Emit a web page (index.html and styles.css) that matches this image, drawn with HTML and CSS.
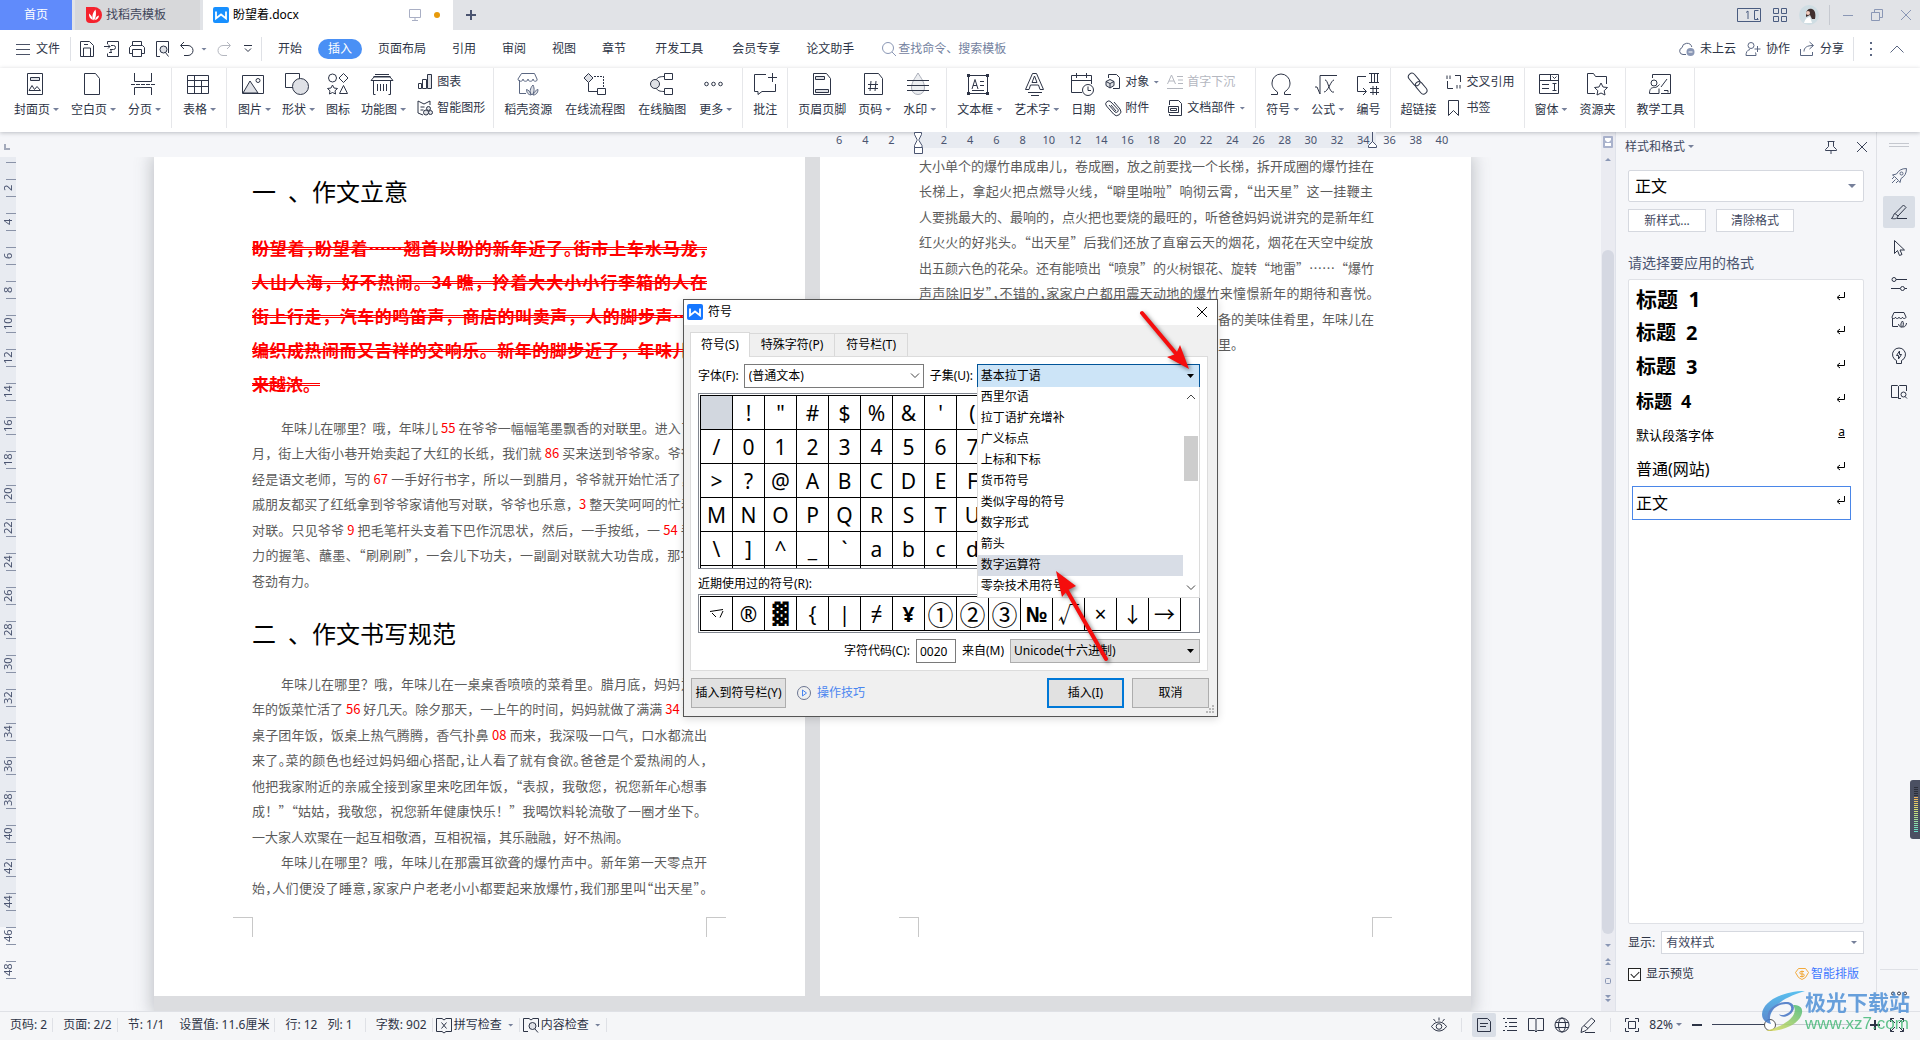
FILE: index.html
```html
<!DOCTYPE html>
<html lang="zh-CN">
<head>
<meta charset="utf-8">
<title>盼望着.docx</title>
<link rel="stylesheet" href="styles.css">
</head>
<body>
<header class="titlebar">
  <button class="doctab doctab-home">首页</button>
  <button class="doctab doctab-store">
    <svg class="i16" viewBox="0 0 16 16"><path d="M0 0h8a8 8 0 0 1 0 16H4a4 4 0 0 1-4-4z" fill="#f5222d"/><path d="M8 13.500C5.500 11 6 6.500 9.500 2.500c1 4 .5 8-1.500 11zM7 13C4 12 2.800 9.500 3 6.500 5 8 6.500 10 7 13zM9 13c.5-2.500 2-4 4-4.500-.3 2.500-1.500 4-4 4.500z" fill="#fff"/></svg>
    <span>找稻壳模板</span>
  </button>
  <button class="doctab doctab-active">
    <svg class="i16" viewBox="0 0 16 16"><rect width="16" height="16" rx="2" fill="#1890ff"/><path d="M3 4.500v7L8 7.500l5 4v-7" fill="none" stroke="#fff" stroke-width="1.800"/></svg>
    <span class="grow">盼望着.docx</span>
    <svg class="i14" viewBox="0 0 14 14" fill="none" stroke="#a9afc4"><path d="M1.500 1.500h11v8h-11zM7 9.500v3M4 12.500h6"/></svg>
    <i class="dot"></i>
  </button>
  <button class="plain newtab"><svg class="i14" viewBox="0 0 14 14"><path d="M7 2v10M2 7h10" stroke="#4a5470" stroke-width="2"/></svg></button>
  <div class="grow"></div>
  <div class="wincontrols">
    <svg width="24" height="14" viewBox="0 0 24 14" fill="none" stroke="#4a5c80"><path d="M.5.5h23v13H.5zM21.500 2.500h-4v9h4M9 4.500l2-1.500v8M20 10.500h1"/></svg>
    <svg width="14" height="14" viewBox="0 0 14 14" fill="none" stroke="#4a5c80"><path d="M.5.5h5v5h-5zM8.500.5h5v5h-5zM.5 8.500h5v5h-5zM8.500 8.500h5v5h-5z"/></svg>
    <svg width="20" height="20" viewBox="0 0 20 20"><circle cx="10" cy="10" r="10" fill="#cfdde3"/><path d="M7 9c0-4 3-6 6-5 3 1 4 5 3 10h-3l-2-4-4 2z" fill="#40302f"/><path d="M5 18c1-4 3-6 6-6l2 6z" fill="#fff"/><circle cx="9" cy="8" r="2" fill="#f0cdbf"/></svg>
    <i class="vsep"></i>
    <svg width="12" height="12" viewBox="0 0 12 12" stroke="#8a97b5"><path d="M1 6.500h10"/></svg>
    <svg width="12" height="12" viewBox="0 0 12 12" fill="none" stroke="#8a97b5"><path d="M.5 3.500h8v8h-8zM3.500 3.500v-3h8v8h-3"/></svg>
    <svg width="12" height="12" viewBox="0 0 12 12" stroke="#8a97b5"><path d="M1 1l10 10M11 1L1 11"/></svg>
  </div>
</header>

<nav class="menubar">
  <button class="plain filebtn"><svg class="i14" viewBox="0 0 14 14" stroke="#4b5266"><path d="M0 2.500h14M0 7.500h14M0 12.500h14"/></svg>文件</button>
  <i class="vsep"></i>
  <div class="quick">
    <svg class="i16 ln" viewBox="0 0 16 16"><path d="M1.500.5h9l4 4v11h-13zM4.500 15v-8h7v8M5 3.500h4"/></svg>
    <svg class="i16 ln" viewBox="0 0 16 16"><path d="M3.500 3V.5h11v15h-11v-3M0 5.500h6l-2-2m2 2-2 2M7 12V8m0-3.500h2.500a2 2 0 0 1 0 4H6M5 11.500h3"/></svg>
    <svg class="i16 ln" viewBox="0 0 16 16"><path d="M3.500 4V.5h9V4M3.500 12.500h-3v-6l2-2h11l2 2v6h-3M3.500 8.500h9v7h-9z"/></svg>
    <svg class="i16 ln" viewBox="0 0 16 16"><path d="M6 15.500H2.500V.5h12V12"/><circle cx="9.500" cy="8.500" r="3.500" fill="#dfe1e6"/><path d="M11.500 11.500l3 4"/></svg>
    <span class="undo"><svg class="i16 ln" viewBox="0 0 16 16"><path d="M5 1L1.500 4.500 5 8M2 4.500h7a5 5 0 0 1 0 10H5"/></svg><i class="caret"></i></span>
    <svg class="i16 ln faint" viewBox="0 0 16 16"><path d="M11 1l3.500 3.500L11 8M14 4.500H7a5 5 0 0 0 0 10h4"/></svg>
    <svg class="i8 ln" viewBox="0 0 8 8"><path d="M0 .5h8M1 3.500l3 3 3-3"/></svg>
  </div>
  <i class="vsep"></i>
  <div class="tabs">
    <button>开始</button><button class="on">插入</button><button>页面布局</button><button>引用</button><button>审阅</button><button>视图</button><button>章节</button><button class="roomy">开发工具</button><button class="roomy">会员专享</button><button>论文助手</button>
  </div>
  <button class="plain search"><svg class="i16" viewBox="0 0 16 16" fill="none" stroke="#8a97b5"><circle cx="7" cy="7" r="5.500"/><path d="M11 11l4 4"/></svg>查找命令、搜索模板</button>
  <div class="grow"></div>
  <button class="plain act"><svg class="i16 ln soft" viewBox="0 0 16 16"><path d="M7 13.500H4a3.500 3.500 0 0 1-1-6.800A5 5 0 0 1 12.800 6"/><circle cx="11.500" cy="11" r="4" fill="#8a97b5" stroke="none"/><path d="M9.500 11h4" stroke="#fff"/></svg>未上云</button>
  <button class="plain act"><svg class="i16 ln soft" viewBox="0 0 16 16"><circle cx="6" cy="4.500" r="3"/><path d="M5 8.500c-3 .5-4 3-4 6h10c0-1 0-2-.5-3M12.500 5v6M9.500 8h6"/></svg>协作</button>
  <button class="plain act"><svg class="i16 ln soft" viewBox="0 0 16 16"><path d="M1.500 8v6.500h12V11M5 10.500c0-4 3-6 9-6M10.500 1l4 3.500-4 3.500"/></svg>分享</button>
  <i class="vsep"></i>
  <svg class="dots" width="3" height="14" viewBox="0 0 3 14" fill="#5b6782"><path d="M0 0h2v2H0zM0 6h2v2H0zM0 12h2v2H0z"/></svg>
  <svg class="fold" width="14" height="8" viewBox="0 0 14 8" fill="none" stroke="#5b6782"><path d="M.5 7.500L7 1l6.500 6.500"/></svg>
</nav>

<div class="ribbon">
  <div class="group">
    <button class="tool"><svg class="ln" viewBox="0 0 24 24"><path d="M4.500 1.500h15v21h-15z"/><path d="M7.500 5.500h9v3h-9z" fill="#dfe1e6"/><path d="M6 18.500l3-5 2.500 4 2.500-3 3.500 4z"/></svg><span>封面页<i class="caret"></i></span></button>
    <button class="tool"><svg class="ln" viewBox="0 0 24 24"><path d="M4.500 1.500h11l4 5v16h-15z"/></svg><span>空白页<i class="caret"></i></span></button>
    <button class="tool"><svg class="ln" viewBox="0 0 24 24"><path d="M3.500 1v8.500h17V1M3.500 23v-7.500h17V23"/><path d="M0 12.500h24" stroke-dasharray="4 1"/></svg><span>分页<i class="caret"></i></span></button>
  </div>
  <div class="group lead-in">
    <button class="tool"><svg class="ln" viewBox="0 0 24 24"><path d="M1.500 3.500h21v18h-21zM1.500 8.500h21M1.500 14.500h21M8.500 3.500v18M15.500 8.500v13"/></svg><span>表格<i class="caret"></i></span></button>
  </div>
  <div class="group lead-in snug">
    <button class="tool"><svg class="ln" viewBox="0 0 24 24"><path d="M1.500 3.500h21v18h-21z"/><path d="M2 21L9 9l8 12z" fill="#dfe1e6"/><circle cx="17" cy="8.500" r="2"/></svg><span>图片<i class="caret"></i></span></button>
    <button class="tool"><svg class="ln" viewBox="0 0 24 24"><path d="M.5 1.500h14v14H.5z"/><circle cx="15.500" cy="14.500" r="8" fill="#dfe1e6"/></svg><span>形状<i class="caret"></i></span></button>
    <button class="tool"><svg class="ln" viewBox="0 0 24 24"><circle cx="6.500" cy="6" r="4"/><path d="M17.500 1.500L22 6l-4.500 4.500L13 6zM17.500 13.500l4 8h-8zM6.500 13l1.500 3 3.500.5-2.500 2.300.6 3.200-3.100-1.500-3.100 1.500.6-3.200L1.500 16.500 5 16z"/></svg><span>图标</span></button>
    <button class="tool"><svg class="ln" viewBox="0 0 24 24"><path d="M5 2.500h14M3.500 4.500h17M1 8.500h22L20 5H4zM3.500 9v13.500h2M20.500 9v13.500h-2M7.500 12v7M10.500 12v7M13.500 12v7M16.500 12v7"/></svg><span>功能图<i class="caret"></i></span></button>
    <div class="pair">
      <button class="mini"><svg class="ln" viewBox="0 0 16 16"><path d="M1.500 9.500h3v5h-3zM5.500 5.500h4v9h-4z"/><path d="M10.500.5h4v14h-4z" fill="#dfe1e6"/></svg>图表</button>
      <button class="mini"><svg class="ln" viewBox="0 0 16 16"><path d="M1 1l6 3 6-3v4M1 1v12l5 2M3.500 7h4M3.500 10h3"/><circle cx="11.500" cy="8.500" r="2" fill="#dfe1e6"/><circle cx="9" cy="12.500" r="2.500" fill="#dfe1e6"/><circle cx="13.500" cy="12.500" r="2" fill="#dfe1e6"/></svg>智能图形</button>
    </div>
  </div>
  <div class="group airy">
    <button class="tool"><svg class="ln soft" viewBox="0 0 24 24"><path d="M3.500 8v13.500H10M2 7c0 3 5 3 5 0 0 3 5 3 5 0 0 3 5 3 5 0 0 3 5 3 4 0l-2.500-5.500h-13z"/><path d="M16 23c-3-2-2-7 1-10 2 4 1 8-1 10zM15 23c-4-.5-4.500-4-4.500-5.500 2 .5 4 2.500 4.500 5.500zM17 23c1-3 3-5 5-5.500 0 2-1 5.500-5 5.500z" fill="#dfe1e6"/></svg><span>稻壳资源</span></button>
    <button class="tool"><svg class="ln" viewBox="0 0 24 24"><path d="M5.500 1.500L10 6l-4.500 4.500L1 6z" fill="#dfe1e6"/><path d="M5.500 10.500v9h9M14.500 16.500h8v6h-8z"/><path d="M11 4.500h9.500V16" stroke-dasharray="2 1"/></svg><span>在线流程图</span></button>
    <button class="tool"><svg class="ln" viewBox="0 0 24 24"><circle cx="5" cy="12" r="4.500" fill="#dfe1e6"/><path d="M14.500 1.500h8v6h-8zM14.500 16.500h8v6h-8zM6.500 7.500c1-2 3-3 8-3M6.500 16.500c1 2 3 3 8 3"/></svg><span>在线脑图</span></button>
    <button class="tool"><svg class="ln" viewBox="0 0 24 24"><circle cx="4.500" cy="12" r="1.800"/><circle cx="11.500" cy="12" r="1.800"/><circle cx="18.500" cy="12" r="1.800"/></svg><span>更多<i class="caret"></i></span></button>
  </div>
  <div class="group">
    <button class="tool"><svg class="ln" viewBox="0 0 24 24"><path d="M13 2.500H1.500v17H5v3l4-3h13.500V12M19.500 1v9M15 5.500h9"/></svg><span>批注</span></button>
  </div>
  <div class="group">
    <button class="tool"><svg class="ln" viewBox="0 0 24 24"><path d="M3.500 1.500h13l4 5v16h-17z"/><path d="M5.500 4.500h9v3h-9zM5.500 17.500h13v3h-13z" fill="#dfe1e6"/></svg><span>页眉页脚</span></button>
    <button class="tool"><svg class="ln" viewBox="0 0 24 24"><path d="M3.500 1.500h14l4 5v16h-18zM10 9l-1 10M15 9l-1 10M7 12.500h10M7 16.500h10"/></svg><span>页码<i class="caret"></i></span></button>
    <button class="tool"><svg class="ln" viewBox="0 0 24 24"><path d="M12 1C9 6 5.500 10 5.500 16a6.500 6.500 0 0 0 13 0C18.500 10 15 6 12 1z" stroke="#a9adb8" fill="#eceef1"/><path d="M1 8.500h22M1 13.500h22M1 18.500h22"/></svg><span>水印<i class="caret"></i></span></button>
  </div>
  <div class="group">
    <button class="tool"><svg class="ln" viewBox="0 0 24 24"><path d="M2.500 3.500h19v18h-19zM6 17L9 7.500 12 17M7 13.500h4M14 9.500h4M14 13.500h4M6 18.500h12"/><path d="M1 2h3v3H1zM20 2h3v3h-3zM1 20h3v3H1zM20 20h3v3h-3z" fill="#2d3446" stroke="none"/></svg><span>文本框<i class="caret"></i></span></button>
    <button class="tool"><svg class="ln" viewBox="0 0 24 24"><path d="M2.500 17.500L9.500 1.500h4l7 16H17L15.500 13h-8L6 17.500zM9 10.500h5l-2.500-6.500zM5 20.500h14M8 23.500h8"/></svg><span>艺术字<i class="caret"></i></span></button>
    <button class="tool"><svg class="ln" viewBox="0 0 24 24"><path d="M11 20.500H.5v-17h20V12M.5 8.500h20M5.500 1v5M15.500 1v5"/><circle cx="17" cy="18" r="5.500"/><path d="M17 14.500v4h3"/></svg><span>日期</span></button>
    <div class="pair">
      <button class="mini"><svg class="ln" viewBox="0 0 16 16"><path d="M3.500 4V.5h8l3 3v11H8"/><path d="M5 5.500l4 2v4l-4 2.500-4-2.500v-4zM1 7.500l4 2 4-2M5 9.500V14" fill="#dfe1e6"/></svg>对象<i class="caret"></i></button>
      <button class="mini"><svg class="ln" viewBox="0 0 16 16"><path d="M4 5l6 7a2 2 0 0 0 3-2.500L6 2A3 3 0 0 0 1.500 6l7 8A4 4 0 0 0 15 9L9 2M6 5l5 6"/></svg>附件</button>
    </div>
    <div class="pair">
      <button class="mini off"><svg class="ln faint" viewBox="0 0 16 16"><path d="M.5 10L4.500 1l4 9M2 7h5M10 2.500h6M11 6h5M11 9.500h5M0 14.500h16"/></svg>首字下沉</button>
      <button class="mini"><svg class="ln" viewBox="0 0 16 16"><path d="M2.500 5V.5h9l3 3v12h-12V14"/><path d="M1.500 6.500h10v6h-10z" fill="#fff"/><path d="M3.500 8.500h6v2h-6z"/></svg>文档部件<i class="caret"></i></button>
    </div>
  </div>
  <div class="group">
    <button class="tool"><svg class="ln" viewBox="0 0 24 24"><path d="M2 22.500h6.500V20C4 17 3 14 3 11a9 9 0 0 1 18 0c0 3-1 6-5.500 9v2.500H22"/></svg><span>符号<i class="caret"></i></span></button>
    <button class="tool"><svg class="ln" viewBox="0 0 24 24"><path d="M1 15h2l3 7V3.500h17M11 8c3-1 4 14 9 12M20 8c-3 0-6 12-10 12"/></svg><span>公式<i class="caret"></i></span></button>
    <button class="tool"><svg class="ln" viewBox="0 0 24 24"><path d="M10 4.500H1.500v15H10M7 16l3.500 3.500L7 23M13 1.500h10M13 10.500h10M15.500 1.500v9M18.500 1.500v9M21.500 1.500v9M17 14v9M20.500 14v9M14 16.500h9M14 20.500h9"/></svg><span>编号</span></button>
  </div>
  <div class="group trim">
    <button class="tool"><svg class="ln" viewBox="0 0 24 24"><g transform="rotate(50 12 12)"><rect x="-1" y="8.500" width="14" height="7" rx="3.500"/><rect x="10" y="8.500" width="14" height="7" rx="3.500"/></g></svg><span>超链接</span></button>
    <div class="pair">
      <button class="mini"><svg class="ln" viewBox="0 0 16 16"><path d="M1.500 7v7.500H7M9 1.500h5.500V8M1 5V1.500M4 5V1.500M11 14.500V11M14 14.500V11"/></svg>交叉引用</button>
      <button class="mini"><svg class="ln" viewBox="0 0 16 16"><path d="M2.500.5h10v15L7.500 10.500l-5 5z"/></svg>书签</button>
    </div>
  </div>
  <div class="group trim">
    <button class="tool"><svg class="ln" viewBox="0 0 24 24"><path d="M2.500 2.500h19v19h-19zM2.500 8.500h19M13.500 2.500v6M15.500 4.500l2 2 2-2M5 12.500h7M5 16.500h7M17.500 11v8M15.500 11.500h4M15.500 18.500h4"/></svg><span>窗体<i class="caret"></i></span></button>
    <button class="tool"><svg class="ln" viewBox="0 0 24 24"><path d="M10 21.500H2.500v-20h6l2 3h11V12"/><path d="M16 11l2 4 4.500.5-3.300 3.200.8 4.300-4-2-4 2 .8-4.300L9.500 15.500 14 15z" fill="#fff"/></svg><span>资源夹</span></button>
  </div>
  <div class="group">
    <button class="tool"><svg class="ln" viewBox="0 0 24 24"><path d="M4.500 6V2.500h18v19H13M13 15l6-8M16 18.500h4v2"/><circle cx="6" cy="11" r="3"/><path d="M1.500 21.500c0-5 2-6 5-6 2 0 3-1 5-3M1.500 21.500H11v-5"/></svg><span>教学工具</span></button>
  </div>
</div>

<main class="work">
  <section class="canvas">
    <div class="hruler">
      <svg class="corner" width="6" height="6" viewBox="0 0 6 6"><path d="M1 0v5h5" fill="none" stroke="#a3aabb" stroke-width="2"/></svg>
      <div class="hscale">
        <div class="hticks">
          <span>6</span><span>4</span><span>2</span><span class="zero"><svg width="10" height="26" viewBox="0 0 10 26" fill="#fff" stroke="#4a5470"><path d="M1.500.5h7v2L6 7.500v1l3 5v2H1.500v-2l2.500-5v-1L1.500 2.500zM1.500 15.500h8v6h-8z"/></svg></span>
          <span>2</span><span>4</span><span>6</span><span>8</span><span>10</span><span>12</span><span>14</span><span>16</span><span>18</span><span>20</span><span>22</span><span>24</span><span>26</span><span>28</span><span>30</span><span>32</span><span class="stop">34<svg width="10" height="20" viewBox="0 0 10 20" fill="#fff" stroke="#4a5470"><path d="M5.500 0v10M1.500 15.500v-2l4-4 4 4v2z"/></svg></span><span>36</span><span>38</span><span>40</span>
        </div>
      </div>
    </div>
    <div class="canvasbody">
      <div class="vruler">
        <div class="vticks">
          <span></span><span>2</span><span>4</span><span>6</span><span>8</span><span>10</span><span>12</span><span>14</span><span>16</span><span>18</span><span>20</span><span>22</span><span>24</span><span>26</span><span>28</span><span>30</span><span>32</span><span>34</span><span>36</span><span>38</span><span>40</span><span>42</span><span>44</span><span class="out">46</span><span class="out">48</span>
        </div>
      </div>
      <div class="stage">
        <div class="sheets">
          <article class="sheet">
            <h1>一&ensp;、作文立意</h1>
            <p class="lead"><span class="tight">盼望着，盼望着……翘首以盼的新年近了。街市上车水马龙，</span><span>人山人海，好不热闹。34 瞧，拎着大大小小行李箱的人在</span><span>街上行走，汽车的鸣笛声，商店的叫卖声，人的脚步声……</span><span>编织成热闹而又吉祥的交响乐。新年的脚步近了，年味儿越</span><span class="end">来越浓。</span></p>
            <p class="body"><span class="first">年味儿在哪里？哦，年味儿 <b>55</b> 在爷爷一幅幅笔墨飘香的对联里。进入了腊</span><span>月，街上大街小巷开始卖起了大红的长纸，我们就 <b>86</b> 买来送到爷爷家。爷爷曾</span><span>经是语文老师，写的 <b>67</b> 一手好行书字，所以一到腊月，爷爷就开始忙活了，亲</span><span>戚朋友都买了红纸拿到爷爷家请他写对联，爷爷也乐意，<b>3</b> 整天笑呵呵的忙着写</span><span>对联。只见爷爷 <b>9</b> 把毛笔杆头支着下巴作沉思状，然后，一手按纸，一 <b>54</b> 手有</span><span>力的握笔、蘸墨、“刷刷刷”，一会儿下功夫，一副副对联就大功告成，那字体</span><span class="end">苍劲有力。</span></p>
            <h1>二&ensp;、作文书写规范</h1>
            <p class="body"><span class="first">年味儿在哪里？哦，年味儿在一桌桌香喷喷的菜肴里。腊月底，妈妈为了</span><span>年的饭菜忙活了 <b>56</b> 好几天。除夕那天，一上午的时间，妈妈就做了满满 <b>34</b> 大一</span><span>桌子团年饭，饭桌上热气腾腾，香气扑鼻 <b>08</b> 而来，我深吸一口气，口水都流出</span><span class="tight">来了。菜的颜色也经过妈妈细心搭配，让人看了就有食欲。爸爸是个爱热闹的人，</span><span>他把我家附近的亲戚全接到家里来吃团年饭，“表叔，我敬您，祝您新年心想事</span><span>成！”“姑姑，我敬您，祝您新年健康快乐！”我喝饮料轮流敬了一圈才坐下。</span><span class="end">一大家人欢聚在一起互相敬酒，互相祝福，其乐融融，好不热闹。</span><span class="first">年味儿在哪里？哦，年味儿在那震耳欲聋的爆竹声中。新年第一天零点开</span><span class="tight">始，人们便没了睡意，家家户户老老小小都要起来放爆竹，我们那里叫“出天星”。</span></p>
            <i class="crop crop-l"></i><i class="crop crop-r"></i>
          </article>
          <article class="sheet">
            <p class="body cont"><span>大小单个的爆竹串成串儿，卷成圈，放之前要找一个长梯，拆开成圈的爆竹挂在</span><span>长梯上，拿起火把点燃导火线，“噼里啪啦”响彻云霄，“出天星”这一挂鞭主</span><span>人要挑最大的、最响的，点火把也要烧的最旺的，听爸爸妈妈说讲究的是新年红</span><span>红火火的好兆头。“出天星”后我们还放了直窜云天的烟花，烟花在天空中绽放</span><span>出五颜六色的花朵。还有能喷出“喷泉”的火树银花、旋转“地雷”……“爆竹</span><span class="tight">声声除旧岁”，不错的，家家户户都用震天动地的爆竹来憧憬新年的期待和喜悦。</span><span>年味儿在年夜饭的餐桌上，在爷爷奶奶和妈妈精心准备的美味佳肴里，年味儿在</span><span class="end">家人团聚的欢声笑语里，年味儿在每个人心中的记忆里。</span></p>
            <i class="crop crop-l"></i><i class="crop crop-r"></i>
          </article>
        </div>
      </div>
    </div>
  </section>

  <div class="scroll">
    <svg class="split" width="10" height="12" viewBox="0 0 10 12"><rect width="10" height="12" rx="1" fill="#a9b2cc"/><path d="M2 2h6v2L6 6H4L2 4zM2 7h6v3H2z" fill="#fff"/></svg>
    <i class="up"></i>
    <div class="thumb"></div>
    <div class="steps">
      <i class="down"></i>
      <svg width="6" height="8" viewBox="0 0 6 8" fill="#8a97b5"><path d="M0 3l3-3 3 3zM0 7l3-3 3 3z"/></svg>
      <svg width="6" height="6" viewBox="0 0 6 6" fill="none" stroke="#8a97b5"><rect x=".5" y=".5" width="5" height="5" rx="1"/></svg>
      <svg width="6" height="8" viewBox="0 0 6 8" fill="#8a97b5"><path d="M0 0h6L3 3zM0 4h6L3 7z"/></svg>
    </div>
  </div>

  <aside class="styles">
    <div class="phead"><span>样式和格式<i class="caret"></i></span><div class="grow"></div>
      <svg width="14" height="14" viewBox="0 0 14 14" fill="none" stroke="#3a4258"><path d="M3.500 1.500h7M4.500 1.500v5l-3 3v1h11v-1l-3-3v-5M7 10.500V14"/></svg>
      <svg width="12" height="12" viewBox="0 0 12 12" stroke="#3a4258"><path d="M1 1l10 10M11 1L1 11"/></svg>
    </div>
    <div class="pbody">
      <div class="selwrap"><select class="bigsel" aria-label="样式"><option>正文</option></select><i class="caret caret-lg"></i></div>
      <div class="pbtns"><button>新样式...</button><button>清除格式</button></div>
      <div class="plabel">请选择要应用的格式</div>
      <ul class="stylelist">
        <li class="s1">标题&ensp;1<svg class="ret" viewBox="0 0 9 8"><path d="M8.500 0v5.500H2M4 3L1 5.500 4 8" /></svg></li>
        <li class="s2">标题&ensp;2<svg class="ret" viewBox="0 0 9 8"><path d="M8.500 0v5.500H2M4 3L1 5.500 4 8" /></svg></li>
        <li class="s2">标题&ensp;3<svg class="ret" viewBox="0 0 9 8"><path d="M8.500 0v5.500H2M4 3L1 5.500 4 8" /></svg></li>
        <li class="s4">标题&ensp;4<svg class="ret" viewBox="0 0 9 8"><path d="M8.500 0v5.500H2M4 3L1 5.500 4 8" /></svg></li>
        <li class="s5">默认段落字体<u class="chr">a</u></li>
        <li>普通(网站)<svg class="ret" viewBox="0 0 9 8"><path d="M8.500 0v5.500H2M4 3L1 5.500 4 8" /></svg></li>
        <li class="cur">正文<svg class="ret" viewBox="0 0 9 8"><path d="M8.500 0v5.500H2M4 3L1 5.500 4 8" /></svg></li>
      </ul>
      <div class="showrow"><label for="show">显示:</label><div class="selwrap grow"><select id="show"><option>有效样式</option></select><i class="caret"></i></div></div>
      <div class="prow"><label><input type="checkbox" class="chk" checked>显示预览</label>
        <a href="#"><svg width="14" height="14" viewBox="0 0 14 14" fill="none" stroke="#f2a93b"><path d="M3.500 1.500h7l3 4-3 5-3.500 2-3.500-2-3-5zM9 4.500H6a1 1 0 0 0 0 2.500h2a1 1 0 0 1 0 2.500H5M7 3.500v7"/></svg>智能排版</a></div>
    </div>
  </aside>

  <aside class="strip">
    <svg class="grip" width="20" height="4" viewBox="0 0 20 4" stroke="#c5c8cf"><path d="M0 .5h20M0 3.500h20"/></svg>
    <button><svg class="i16 ln soft" viewBox="0 0 16 16"><path d="M15.500.5c-5 0-8 2-10 5.500l-4 1 2 1.500 4 4 1.500 2 1-4c3.500-2 5.500-5 5.500-10zM1 11l2-2M1 15l3.500-3.500M5 15l2-2"/><circle cx="10.500" cy="5.500" r="1.500"/></svg></button>
    <button class="on"><svg class="i16 ln" viewBox="0 0 16 16"><path d="M4 9.500L12.500 1l2.500 2.500L7 12M4 9.500c-2 .5-1 3-3.500 5 3 .5 6 .5 6.500-2.500zM6 14.500h10"/></svg></button>
    <button><svg class="i16 ln" viewBox="0 0 16 16"><path d="M3.500.5v13l3-3 2 5 2.500-1-2-4.500h4.500z"/></svg></button>
    <button><svg class="i16 ln" viewBox="0 0 16 16"><circle cx="3" cy="3.500" r="2"/><path d="M5 3.500h11M0 12.500h9M14 12.500h2"/><circle cx="11.500" cy="12.500" r="2"/></svg></button>
    <button><svg class="i16 ln" viewBox="0 0 16 16"><path d="M1.500 6v8.500H7M1 5c0 2 3.500 2 3.500 0 0 2 3.500 2 3.500 0 0 2 3.500 2 3.500 0 0 2 3.500 2 3.500 0l-2-4.500H3z"/><path d="M11 15.500c-2-2-1-5 .5-6.500 1.500 2 1 5-.5 6.500zM10.500 15c-2 0-3-2-3-3M12 15c2 0 3.500-2 3.500-4" fill="#dfe1e6"/></svg></button>
    <button><svg class="i16 ln" viewBox="0 0 16 16"><path d="M5.500 12.500a6.500 6.500 0 1 1 5 0v3h-5zM8.500 3L5.500 7.500h2V11l3-4.500h-2z"/></svg></button>
    <button><svg class="i16 ln" viewBox="0 0 16 16"><path d="M7.500 14.500l-1-1h-6v-12h6l1 1 1-1h7V7M7.500 2.500v12H10"/><circle cx="12.500" cy="10.500" r="2.500"/><path d="M14 12.500l2 2"/></svg></button>
    <div class="grow"></div>
    <i class="hr"></i>
    <svg class="more" width="16" height="5" viewBox="0 0 16 5" fill="none" stroke="#2d3446"><circle cx="2" cy="2.500" r="1.500"/><circle cx="8" cy="2.500" r="1.500"/><circle cx="14" cy="2.500" r="1.500"/></svg>
  </aside>
</main>

<footer class="status">
  <span>页码: 2</span><i class="vsep"></i><span>页面: 2/2</span><i class="vsep"></i><span>节: 1/1</span><span class="far">设置值: 11.6厘米</span><i class="vsep"></i><span>行: 12</span><span>列: 1</span><i class="vsep wide"></i><span>字数: 902</span><i class="vsep"></i>
  <button class="plain chk-btn"><svg class="i16 ln" viewBox="0 0 16 16"><path d="M6 1.500H.5v13H6l2 1.500 2-1.500h5.500v-13H10L8 3 6 1.500M5.500 5.500l5 6M10.500 5.500l-5 6"/></svg>拼写检查<i class="caret"></i></button><i class="vsep"></i>
  <button class="plain chk-btn"><svg class="i16 ln" viewBox="0 0 16 16"><path d="M5 14.500H.5v-13H6L8 3l2-1.500h5.500V10"/><circle cx="9.500" cy="9" r="3.500" fill="#dfe1e6"/><path d="M12 12l3 3.500"/></svg>内容检查<i class="caret"></i></button><i class="vsep"></i>
  <div class="grow"></div>
  <div class="views">
    <svg class="i16 ln" viewBox="0 0 16 16"><path d="M.5 9.500c4-6 11-6 15 0-4 6-11 6-15 0zM8 .5v3M2.500 2l2 2.500M13.500 2l-2 2.500"/><circle cx="8" cy="9.500" r="2.800"/></svg>
    <i class="vsep"></i>
    <span class="on"><svg class="i16 ln" viewBox="0 0 16 16"><path d="M1.500 1.500h10l3 3v10h-13zM4 6.500h8M4 9.500h6"/></svg></span>
    <svg class="i16 ln" viewBox="0 0 16 16"><path d="M1 1.500h2M5 1.500h10M3 5.500h2M7 5.500h8M3 9.500h2M7 9.500h8M1 13.500h2M5 13.500h10"/></svg>
    <svg class="i16 ln" viewBox="0 0 16 16"><path d="M.5 1.500H7l1 1 1-1h6.500v12H9.500L8 15l-1.500-1.500h-6zM8 2.500V15"/></svg>
    <svg class="i16 ln" viewBox="0 0 16 16"><circle cx="8" cy="8" r="7"/><ellipse cx="8" cy="8" rx="3.500" ry="7"/><path d="M1.500 5.500h13M1.500 10.500h13"/></svg>
    <svg class="i16 ln" viewBox="0 0 16 16"><path d="M2 10.500L11.500 1 15 4 6 13.500l-5 2zM4 8.500l4 3M5 15.500h10"/></svg>
    <i class="vsep"></i>
    <svg class="i14 ln" viewBox="0 0 14 14"><path d="M.5 4V.5H4M10 .5h3.500V4M13.500 10v3.500H10M4 13.500H.5V10M3.500 3.500h7v7h-7z"/></svg>
    <span class="pct">82%<i class="caret"></i></span>
    <svg width="10" height="2"><path d="M0 1h10" stroke="#2d3446" stroke-width="2"/></svg>
    <input class="zoom" type="range" min="0" max="100" value="38" aria-label="缩放">
    <svg class="i10" viewBox="0 0 10 10"><path d="M5 0v10M0 5h10" stroke="#2d3446" stroke-width="2"/></svg>
    <svg class="i14 ln" viewBox="0 0 14 14"><path d="M.5 4V.5H4M.5.5L5 5M10 .5h3.500V4M13.500.5L9 5M13.500 10v3.500H10M13.500 13.500L9 9M4 13.500H.5V10M.5 13.500L5 9"/></svg>
  </div>
</footer>

<div class="meter" aria-hidden="true"><i></i></div>

<section class="dialog" role="dialog" aria-label="符号">
  <div class="dtitle"><svg class="i16" viewBox="0 0 16 16"><rect width="16" height="16" rx="2" fill="#1677ff"/><path d="M3 4.500v7L8 7.500l5 4v-7" fill="none" stroke="#fff" stroke-width="1.800"/></svg><span class="grow">符号</span><svg width="12" height="12" viewBox="0 0 12 12" stroke="#000"><path d="M1 1l10 10M11 1L1 11"/></svg></div>
  <div class="dtabs"><button class="on">符号(S)</button><button>特殊字符(P)</button><button>符号栏(T)</button></div>
  <div class="dpage">
    <div class="drow">
      <label for="font">字体(F):</label>
      <div class="selwrap fontsel"><select id="font"><option>(普通文本)</option></select><svg class="chev" viewBox="0 0 10 6"><path d="M1 .5l4 4 4-4"/></svg></div>
      <label for="subset">子集(U):</label>
      <div class="combo">
        <div class="selwrap"><select id="subset"><option>基本拉丁语</option></select><i class="tri"></i></div>
        <div class="droplist">
          <ul><li>西里尔语</li><li>拉丁语扩充增补</li><li>广义标点</li><li>上标和下标</li><li>货币符号</li><li>类似字母的符号</li><li>数字形式</li><li>箭头</li><li class="on">数字运算符</li><li>零杂技术用符号</li></ul>
          <div class="dscroll"><svg class="chev" viewBox="0 0 10 6"><path d="M1 5l4-4 4 4"/></svg><i></i><svg class="chev" viewBox="0 0 10 6"><path d="M1 .5l4 4 4-4"/></svg></div>
        </div>
      </div>
    </div>
    <div class="glyphbox tall"><table class="glyphs"><tbody>
      <tr><td class="sel"></td><td>!</td><td>"</td><td>#</td><td>$</td><td>%</td><td>&amp;</td><td>'</td><td>(</td><td></td><td></td><td></td><td></td><td></td><td></td></tr>
      <tr><td>/</td><td>0</td><td>1</td><td>2</td><td>3</td><td>4</td><td>5</td><td>6</td><td>7</td><td></td><td></td><td></td><td></td><td></td><td></td></tr>
      <tr><td>&gt;</td><td>?</td><td>@</td><td>A</td><td>B</td><td>C</td><td>D</td><td>E</td><td>F</td><td></td><td></td><td></td><td></td><td></td><td></td></tr>
      <tr><td>M</td><td>N</td><td>O</td><td>P</td><td>Q</td><td>R</td><td>S</td><td>T</td><td>U</td><td></td><td></td><td></td><td></td><td></td><td></td></tr>
      <tr><td>\</td><td>]</td><td>^</td><td>_</td><td>`</td><td>a</td><td>b</td><td>c</td><td>d</td><td></td><td></td><td></td><td></td><td></td><td></td></tr>
      <tr><td></td><td></td><td></td><td></td><td></td><td></td><td></td><td></td><td></td><td></td><td></td><td></td><td></td><td></td><td></td></tr>
    </tbody></table></div>
    <div class="recent">近期使用过的符号(R):</div>
    <div class="glyphbox"><table class="glyphs"><tbody>
      <tr><td><svg width="16" height="10" viewBox="0 0 16 10" fill="none" stroke="#000"><path d="M1 2.500L14 .5M3 4l4 4M14 2l-3 6.500"/></svg></td><td>®</td><td class="shade">▓</td><td>{</td><td>|</td><td>≠</td><td class="heavy">¥</td><td class="circ">①</td><td class="circ">②</td><td class="circ">③</td><td class="heavy">№</td><td>√</td><td>×</td><td>↓</td><td>→</td></tr>
    </tbody></table></div>
    <div class="drow coderow">
      <label for="code">字符代码(C):</label><input id="code" value="0020">
      <label for="from">来自(M)</label><div class="selwrap fromsel"><select id="from"><option>Unicode(十六进制)</option></select><i class="tri"></i></div>
    </div>
  </div>
  <div class="dfoot">
    <button class="wide">插入到符号栏(Y)</button>
    <a href="#"><svg class="i14" viewBox="0 0 14 14" fill="none" stroke="#6b7590"><circle cx="7" cy="7" r="6.500"/><path d="M5.500 4l4 3-4 3z" stroke="#4a86f0"/></svg>操作技巧</a>
    <div class="grow"></div>
    <button class="primary">插入(I)</button><button>取消</button>
  </div>
  <svg class="sizer" width="9" height="9" viewBox="0 0 9 9" fill="#b8b8b8"><path d="M6 0h2v2H6zM3 3h2v2H3zM6 3h2v2H6zM0 6h2v2H0zM3 6h2v2H3zM6 6h2v2H6z"/></svg>
  <svg class="arrows" width="140" height="350" viewBox="0 0 140 350"><g fill="#f50d0d" stroke="#f50d0d" stroke-linecap="round"><path d="M85 1L121 44M49 347L9 277" fill="none" stroke-width="4"/><path d="M132 57L110 45l9-3 4-9zM-1 259l20 15-8 4-6 7z" stroke="none"/></g></svg>
</section>

<div class="mark">
  <svg width="44" height="44" viewBox="0 0 44 44"><defs><linearGradient id="sw" x1="0" y1="0" x2="0" y2="1"><stop offset="0" stop-color="#3fb7ee"/><stop offset="1" stop-color="#4373c4"/></linearGradient><linearGradient id="sg" x1="1" y1="0" x2="0" y2="1"><stop offset="0" stop-color="#46b978"/><stop offset="1" stop-color="#e8e05a"/></linearGradient></defs><path d="M44 1C22 1 2 11 1 24c0 6 4 9 9 10C6 26 12 10 44 1z" fill="url(#sw)"/><path d="M9 31c-3-8 6-17 16-17 6 0 7 6 2 9-3 2-7 3-9 1 1 3 6 4 10 1 8-5 6-14-4-13-12 1-22 12-15 19z" fill="#4373c4"/><path d="M5 41c16 1 34-7 36-18 1-6-3-8-9-8 7 10-8 21-27 26z" fill="url(#sg)"/></svg>
  <div><strong>极光下载站</strong><em>www.xz7.com</em></div>
</div>
</body>
</html>
```
FILE: styles.css
```css
* { box-sizing: border-box; }
html, body { height: 100%; }
body {
  margin: 0;
  display: flex;
  flex-direction: column;
  overflow: hidden;
  position: relative;
  font: 12px/16px "Noto Sans", "Noto Sans CJK SC", sans-serif;
  color: #2d3446;
  background: #f5f6f9;
}
button, select, input { font: inherit; color: inherit; margin: 0; padding: 0; }
button { border: 0; background: none; white-space: nowrap; }
select { appearance: none; outline: 0; width: 100%; height: 100%; border-radius: 0; }
svg { display: block; flex: none; overflow: visible; }
a { color: #4a86f0; text-decoration: none; }
h1, p, ul { margin: 0; padding: 0; }
ul { list-style: none; }
.grow { flex: 1; }
.plain { display: flex; align-items: center; }
.i16 { width: 16px; height: 16px; }
.i14 { width: 14px; height: 14px; }
.i10 { width: 10px; height: 10px; }
.i8 { width: 8px; height: 8px; }
.ln { fill: none; stroke: #2d3446; }
.soft { stroke: #5b6782; }
.faint { stroke: #b4b7bf; }
.vsep { width: 1px; background: #dfe1e6; flex: none; }
.caret {
  display: inline-block; width: 6px; height: 3px; background: #76809a;
  clip-path: polygon(0 0, 100% 0, 50% 100%); margin-left: 3px; vertical-align: 3px; flex: none;
}

/* title bar */
.titlebar { display: flex; height: 30px; background: #e1e3e7; flex: none; }
.doctab { display: flex; align-items: center; height: 30px; gap: 4px; }
.doctab-home { width: 72px; justify-content: center; background: #608bfb; color: #fff; }
.doctab-store { width: 125px; margin-left: 3px; padding-left: 11px; background: #d7d8da; color: #3f465a; }
.doctab-active { width: 250px; margin-left: 3px; padding: 0 13px 0 10px; background: #fff; color: #000; text-align: left; }
.doctab-active .dot { width: 6px; height: 6px; margin-left: 8px; border-radius: 3px; background: #e79a0b; }
.newtab { padding: 0 11px; }
.wincontrols { display: flex; align-items: center; padding-right: 8px; gap: 12px; }
.wincontrols .vsep { height: 20px; margin-left: -2px; background: #c6c9d0; }
.wincontrols svg:nth-of-type(n+5) { margin-left: 5px; }

/* menu bar */
.menubar { display: flex; align-items: center; height: 38px; background: #fff; flex: none; padding-right: 13px; }
.filebtn { padding: 0 10px 0 16px; gap: 6px; }
.menubar .vsep { height: 24px; }
.quick { display: flex; align-items: center; gap: 9px; padding: 0 9px 0 8px; }
.undo { display: flex; align-items: center; gap: 3px; }
.quick .i8 { margin: 0 0 0 3px; }
.tabs { display: flex; padding-left: 3px; }
.tabs button { height: 24px; padding: 0 13px; border-radius: 12px; }
.tabs .on { margin: 2px 3px; height: 20px; padding: 0 10px; background: #4a90f5; color: #fff; }
.tabs .roomy { margin-left: 3px; }
.search { color: #7482a0; margin-left: 14px; gap: 1px; }
.act { gap: 5px; margin-left: 9px; }
.menubar .act ~ .vsep { margin-left: 9px; }
.dots { margin: 0 13px 0 16px; }
.fold { margin: 0 3px 0 4px; }

/* ribbon */
.ribbon {
  display: flex; height: 64px; background: #fff; flex: none; position: relative;
  padding-left: 4px; box-shadow: 0 1px 4px rgba(60, 66, 80, .3);
}
.group { display: flex; gap: 12px; padding: 4px 10px 0; border-right: 1px solid #e6e7ea; height: 60px; }
.lead-in { padding-left: 11px; }
.snug { gap: 11px; padding-right: 8px; }
.trim { padding-left: 9px; }
.airy { gap: 13px; }
.tool { display: flex; flex-direction: column; height: 46px; justify-content: space-between; }
.tool svg { width: 24px; height: 24px; align-self: center; }
.tool:has(.caret) svg { margin-right: 3px; }
.pair { display: flex; flex-direction: column; gap: 10px; margin-left: -2px; padding-top: 2px; }
.snug .pair { margin-left: 0; }
.pair + .pair { margin-left: -4px; }
.mini { display: flex; align-items: center; gap: 4px; height: 16px; }
.mini svg { width: 16px; height: 16px; }
.mini .caret { margin: 0; }
.off { color: #b4b7bf; }

/* work area */
.work { flex: 1; display: flex; min-height: 0; }
.canvas { flex: 1; display: flex; flex-direction: column; min-width: 0; }
.hruler { height: 25px; flex: none; display: flex; justify-content: center; padding-left: 24px; position: relative; }
.corner { position: absolute; left: 4px; top: 12px; }
.hscale { width: 1317px; padding-left: 672px; }
.hticks { display: grid; grid-template-columns: repeat(24, 1fr); width: 629px; height: 25px; }
.hticks span { text-align: center; height: 16px; line-height: 16px; color: #4a5470; font-size: 11px; background: #e8ebf1; position: relative; }
.hticks span:nth-child(-n+3), .hticks span:nth-child(n+22) { background: none; }
.hticks .zero { background: linear-gradient(90deg, transparent 50%, #e8ebf1 50%); }
.zero svg { position: absolute; left: 8px; top: 0; z-index: 1; }
.stop svg { position: absolute; left: 17px; top: 0; z-index: 1; }
.canvasbody { flex: 1; display: flex; min-height: 0; }
.vruler { width: 16px; flex: none; overflow: hidden; }
.vticks span {
  display: block; width: 16px; height: 34px; writing-mode: vertical-rl; transform: rotate(180deg);
  font-size: 11px; line-height: 16px; text-align: center; padding-top: 16px; color: #4a5470;
  background: linear-gradient(#8a93a8, #8a93a8) 0 100% / 10px 1px no-repeat, linear-gradient(#8a93a8, #8a93a8) 0 16px / 10px 1px no-repeat, #e8ebf1;
}
.vticks span:first-child { height: 22px; background: linear-gradient(#8a93a8, #8a93a8) 0 16px / 10px 1px no-repeat, #e8ebf1; }
.vticks .out { background-color: #f5f6f9; }
.stage { flex: 1; display: flex; justify-content: center; align-items: flex-start; padding-left: 8px; overflow: hidden; }
.sheets { display: flex; gap: 15px; padding-bottom: 16px; background: #dcdde0; box-shadow: 0 0 16px 2px rgba(90, 94, 104, .35); font-family: "Noto Sans CJK SC", sans-serif; }
.sheet { width: 651px; height: 839px; background: #fff; padding: 0 98px; position: relative; }
.sheet h1 { font-size: 24px; font-weight: 400; line-height: 36px; color: #000; padding-top: 16px; }
.sheet p span { display: block; white-space: nowrap; text-align: justify; text-align-last: justify; }
.sheet p .end { text-align-last: left; }
.sheet .tight { font-feature-settings: "halt"; }
.lead { padding-top: 22px; font-size: 17px; font-weight: 700; line-height: 34px; color: #f00; }
.lead span { text-decoration: line-through double #f00; }
.body { font-size: 13px; line-height: 25px; color: #5c5c5c; padding-top: 14px; }
.body span:nth-child(even) { line-height: 26px; }
.body .first { padding-left: 29px; }
.body b { font-weight: 400; color: #f00; }
.lead + .body + h1 { padding-top: 22px; }
h1 + .body { padding-top: 20px; }
.cont { padding: 0 0 0 1px; margin-top: -4px; }
.crop { position: absolute; width: 20px; height: 20px; bottom: 59px; border-top: 1px solid #c8c8c8; }
.crop-l { left: 79px; border-right: 1px solid #c8c8c8; }
.crop-r { right: 79px; border-left: 1px solid #c8c8c8; }

/* scroll bar */
.scroll { width: 15px; flex: none; display: flex; flex-direction: column; align-items: center; background: #eaebf1; border-right: 1px solid #dfe2ea; }
.split { margin: 4px 0; }
.up, .down { width: 6px; height: 3px; background: #8a97b5; }
.up { clip-path: polygon(50% 0, 100% 100%, 0 100%); margin-top: 6px; }
.down { clip-path: polygon(0 0, 100% 0, 50% 100%); }
.thumb { flex: 1; width: 12px; margin-top: 89px; border-radius: 6px; background: #d5d8e2; }
.steps { height: 77px; display: flex; flex-direction: column; align-items: center; justify-content: space-between; padding: 10px 0 8px; }

/* styles panel */
.styles { width: 260px; flex: none; display: flex; flex-direction: column; }
.phead { display: flex; align-items: center; gap: 12px; padding: 7px 8px 0 9px; color: #3f4860; }
.phead svg + svg { margin-left: 6px; }
.pbody { flex: 1; display: flex; flex-direction: column; padding: 15px 12px 29px; }
.selwrap { position: relative; display: flex; }
.selwrap .caret { position: absolute; right: 7px; top: 10px; }
.selwrap .caret-lg { width: 8px; height: 4px; right: 8px; top: 14px; }
.bigsel { height: 32px; border: 1px solid #d5d8df; border-radius: 2px; background: #fff; padding: 0 6px; font-size: 16px; color: #000; }
.pbtns { display: flex; gap: 10px; padding-top: 7px; }
.pbtns button { width: 78px; height: 23px; border: 1px solid #d5d8df; background: #fff; color: #3f4860; }
.plabel { font-size: 14px; line-height: 20px; padding: 21px 0 6px; color: #4a5470; }
.stylelist { flex: 1; padding: 2px 12px 0 3px; border: 1px solid #dfe1e6; border-radius: 2px; background: #fff; color: #000; font-size: 16px; line-height: 32px; }
.stylelist li { display: flex; justify-content: space-between; height: 34px; padding: 0 5px 0 3px; border: 1px solid transparent; }
.stylelist .cur { border-color: #4a86e8; }
.stylelist .s1 { font-size: 21px; font-weight: 700; }
.stylelist .s2 { font-size: 20px; font-weight: 700; }
.stylelist .s4 { font-size: 18px; font-weight: 700; }
.stylelist .s5 { font-size: 13px; }
.ret { width: 9px; height: 8px; margin-top: 9px; fill: none; stroke: #000; }
.chr { font-size: 12px; line-height: 26px; }
.showrow { display: flex; align-items: center; gap: 6px; padding-top: 7px; }
.showrow select { height: 23px; border: 1px solid #d5d8df; background: #fff; padding: 0 4px; color: #3f4860; }
.prow { display: flex; justify-content: space-between; align-items: center; padding: 12px 5px 0 0; }
.prow label, .prow a { display: flex; align-items: center; gap: 5px; }
.prow a { gap: 2px; color: #3f78ff; }
.chk { appearance: none; width: 13px; height: 13px; border: 1px solid #222; background: #fff; position: relative; }
.chk:checked::after { content: ""; position: absolute; left: 2px; top: 2px; width: 7px; height: 4px; border: solid #222; border-width: 0 0 1px 1px; transform: rotate(-45deg); }

/* side strip */
.strip { width: 44px; flex: none; display: flex; flex-direction: column; align-items: center; border-left: 1px solid #dfe1e6; gap: 4px; padding-bottom: 15px; }
.grip { margin: 11px 0 9px; }
.strip button { width: 32px; height: 32px; display: flex; align-items: center; justify-content: center; border-radius: 2px; }
.strip .on { background: #d9dee6; }
.strip .hr { width: 38px; height: 1px; background: #dfe1e6; }
.strip .more { margin-top: 17px; }

/* status bar */
.status { height: 29px; flex: none; display: flex; align-items: center; gap: 10px; padding: 0 16px 2px 10px; border-top: 1px solid #dfe1e6; background: #f5f6f8; }
.status .vsep { height: 14px; margin-left: -5px; }
.status .wide { margin-left: 2px; }
.status .far { margin-left: 5px; }
.chk-btn { gap: 2px; margin-left: -7px; }
.chk-btn .caret { margin-left: 4px; }
.views { display: flex; align-items: center; gap: 10px; }
.views .vsep { margin: 0 4px; }
.views .on { background: #d9dee6; padding: 4px; margin: 0 -4px; border-radius: 2px; }
.zoom { appearance: none; width: 148px; height: 14px; background: linear-gradient(90deg, #3a4258 38%, #c6c9d0 38%) 0 6px / 100% 1px no-repeat; }
.zoom::-webkit-slider-thumb { appearance: none; width: 12px; height: 12px; border-radius: 6px; border: 1px solid #555; background: #fff; }

.meter { position: absolute; right: 0; top: 780px; width: 10px; height: 59px; padding: 7px 2px 7px 4px; border-radius: 3px 0 0 3px; background: #4b5062; }
.meter i { display: block; height: 45px; background: repeating-linear-gradient(transparent 0 1px, #4b5062 1px 2px), linear-gradient(#2c2f3a 22%, #f0b25a 22%, #d8e070 50%, #62dcc8); }

/* symbol dialog */
.dialog { position: absolute; left: calc(50% - 277px); top: 299px; width: 535px; border: 1px solid #555; background: #f0f0f0; color: #000; box-shadow: 0 2px 8px rgba(0, 0, 0, .15); }
.dtitle { display: flex; align-items: center; gap: 5px; height: 25px; padding: 0 9px 2px 3px; background: #fff; }
.dtabs { display: flex; align-items: flex-end; padding: 6px 7px 0 6px; height: 31px; }
.dtabs button { height: 23px; padding: 0 11px; border: 1px solid #d9d9d9; border-left: 0; border-bottom: 0; }
.dtabs .on { height: 25px; padding: 0 10px; border-left: 1px solid #d9d9d9; background: #fff; position: relative; margin-bottom: -1px; z-index: 1; }
.dpage { margin: 0 9px 0 6px; padding: 7px; border: 1px solid #dcdcdc; background: #fff; }
.drow { display: flex; align-items: center; }
.drow .selwrap { height: 24px; }
.fontsel { width: 180px; margin: 0 6px 0 5px; }
.fontsel select { border: 1px solid #7a7a7a; background: #fff; padding: 0 4px; }
.chev { width: 10px; height: 6px; fill: none; stroke: #444; }
.fontsel .chev { position: absolute; right: 4px; top: 9px; }
.combo { flex: 1; position: relative; margin-left: 4px; }
.combo select { border: 1px solid #005499; background: #cce4f7; padding: 0 3px; color: #000; }
.tri { position: absolute; right: 6px; top: 10px; width: 7px; height: 4px; background: #000; clip-path: polygon(0 0, 100% 0, 50% 100%); }
.droplist { position: absolute; left: 0; right: 0; top: 23px; display: flex; border: 1px solid #dcdcdc; border-top: 0; background: #fff; z-index: 2; }
.droplist ul { flex: 1; }
.droplist li { height: 21px; line-height: 20px; padding-left: 3px; }
.droplist .on { background: #d8dde6; }
.dscroll { width: 16px; display: flex; flex-direction: column; align-items: center; padding: 7px 0 6px; }
.dscroll i { width: 14px; height: 45px; margin: 36px 0 auto; background: #cdcdcd; }
.glyphbox { border: 1px solid #828790; padding: 1px; margin-top: 5px; overflow: hidden; }
.tall { height: 176px; }
.glyphs { border-spacing: 1px; background: #000; table-layout: fixed; width: 481px; }
.glyphs td { width: 31px; height: 33px; padding: 0; background: #fff; text-align: center; font: 21px/30px "Noto Sans", "Noto Sans CJK SC", sans-serif; }
.glyphs td svg { margin: 0 auto; }
.glyphs .sel { background: #d2d7df; }
.glyphs .circ { font-size: 26px; font-family: "Noto Sans CJK SC", sans-serif; }
.glyphs .heavy { font-weight: 700; }
.glyphs .shade { font-family: "DejaVu Sans", sans-serif; }
.recent { line-height: 18px; padding-top: 6px; margin-bottom: -4px; }
.coderow { justify-content: flex-end; padding-top: 6px; }
#code { width: 40px; height: 24px; border: 1px solid #7a7a7a; padding: 0 3px; margin: 0 6px; }
.fromsel { width: 190px; margin-left: 6px; }
.fromsel select { border: 1px solid #adadad; background: #e1e1e1; padding: 0 3px; }
.dfoot { display: flex; align-items: center; gap: 8px; padding: 7px 8px 8px 7px; }
.dfoot button { width: 77px; height: 30px; border: 1px solid #adadad; background: #e1e1e1; }
.dfoot .wide { width: 95px; }
.dfoot .primary { border: 2px solid #0078d7; }
.dfoot a { display: flex; align-items: center; gap: 6px; margin-left: 3px; }
.sizer { position: absolute; right: 2px; bottom: 2px; }
.arrows { position: absolute; left: 373px; top: 12px; z-index: 3; filter: drop-shadow(2px 2px 2px rgba(0, 0, 0, .5)); }

.mark { position: absolute; right: 10px; bottom: 6px; display: flex; align-items: center; opacity: .85; }
.mark div { display: flex; flex-direction: column; }
.mark strong { font-size: 21px; line-height: 24px; color: #4f90d6; }
.mark em { font: 17px/20px "Liberation Sans", sans-serif; color: #46b978; }
```
